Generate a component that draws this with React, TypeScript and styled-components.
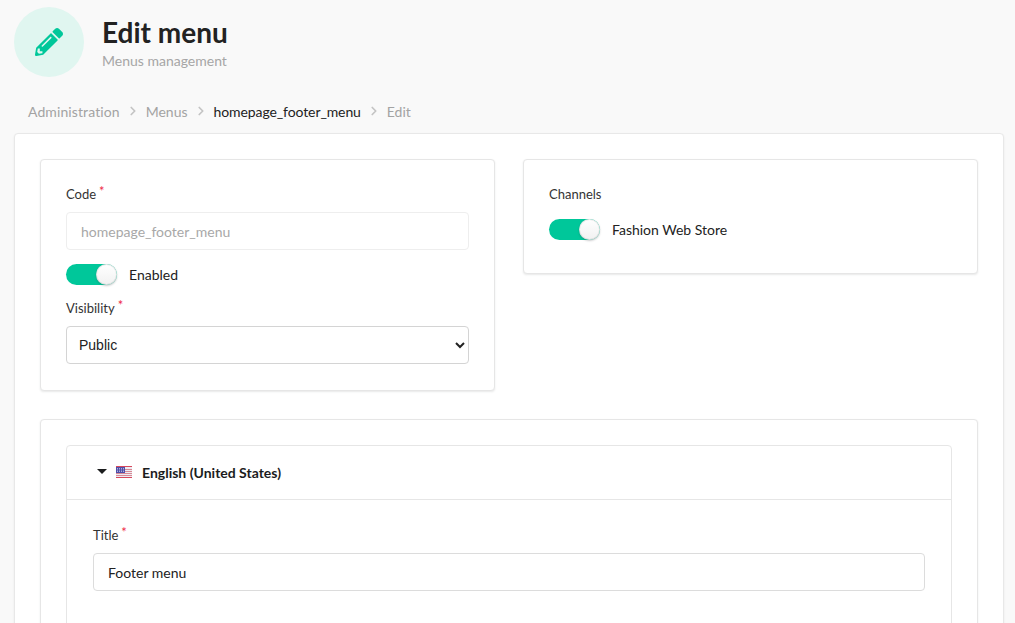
import React from 'react';
import styled, { createGlobalStyle } from 'styled-components';
import { FaPencilAlt } from 'react-icons/fa';
import { ChevronRight } from 'lucide-react';

const GlobalStyle = createGlobalStyle`
    html, body {
        margin: 0;
        height: 623px;
        overflow: hidden;
        background: #f9f9f9;
        font-family: Lato, 'Liberation Sans', sans-serif;
        font-size: 14px;
        color: #222;
    }
    * {
        box-sizing: border-box;
    }
`;

const Page = styled.div`
    padding: 7px 11px 0 14px;
`;
const Header = styled.header`
    display: flex;
    align-items: flex-start;
    gap: 18px;
`;
const IconCircle = styled.div`
    width: 70px;
    height: 70px;
    border-radius: 50%;
    background: #e0f6f0;
    color: #00c79a;
    display: flex;
    align-items: center;
    justify-content: center;
    font-size: 28px;
`;
const HeaderText = styled.div`
    padding-top: 8px;
`;
const Title = styled.h1`
    margin: 0;
    font-size: 28px;
    line-height: 34px;
    font-weight: 700;
    color: #222;
`;
const Subtitle = styled.div`
    margin-top: 2px;
    font-size: 14px;
    line-height: 20px;
    color: #a6a6a6;
`;
const Breadcrumb = styled.nav`
    display: flex;
    align-items: center;
    margin: 24px 0 0 14px;
    height: 20px;
    font-size: 14px;
`;
const Crumb = styled.span<{ $active?: boolean; $spacing?: number }>`
    color: ${(p) => (p.$active ? '#222' : '#a3a3a3')};
    letter-spacing: ${(p) => p.$spacing ?? 0}px;
`;
const Divider = styled.span`
    display: flex;
    width: 26px;
    justify-content: center;
    color: #c4c4c4;
`;
const Main = styled.main`
    margin-top: 12px;
    padding: 25px;
    background: #fff;
    border: 1px solid #e8e8e8;
    border-radius: 4px;
    box-shadow: 0 1px 2px rgba(34, 36, 38, 0.08);
`;
const Columns = styled.div`
    display: grid;
    grid-template-columns: 455px 455px;
    gap: 28px;
    align-items: start;
`;
const Card = styled.section`
    padding: 25px;
    background: #fff;
    border: 1px solid #e6e6e6;
    border-radius: 4px;
    box-shadow: 0 1px 2px rgba(34, 36, 38, 0.1);
`;
const FormCard = styled(Card)`
    padding-bottom: 26px;
`;
const TranslationCard = styled(Card)`
    margin-top: 28px;
    width: 938px;
`;
const Label = styled.label`
    display: block;
    font-size: 13px;
    line-height: 18px;
    color: #333;
    margin-bottom: 9px;
`;
const Star = styled.span`
    color: #ee2a47;
    font-size: 13px;
    margin-left: 3px;
    position: relative;
    top: -3px;
`;
const TextInput = styled.div<{ $disabled?: boolean }>`
    height: 38px;
    display: flex;
    align-items: center;
    padding: 0 14px;
    font-size: 14px;
    border-radius: 4px;
    color: ${(p) => (p.$disabled ? '#a8a8a8' : '#222')};
    border: 1px solid ${(p) => (p.$disabled ? '#eeeeee' : '#dcdcdc')};
    background: #fff;
`;
const ToggleRow = styled.div<{ $gap: number }>`
    display: flex;
    align-items: center;
    gap: 12px;
    height: 21px;
    margin-top: ${(p) => p.$gap}px;
    font-size: 14px;
    color: #222;
`;
const Track = styled.span`
    position: relative;
    display: block;
    width: 51px;
    height: 21px;
    border-radius: 11px;
    background: #00c79a;
`;
const Knob = styled.span`
    position: absolute;
    top: 0;
    right: 0;
    width: 21px;
    height: 21px;
    border-radius: 50%;
    background: linear-gradient(#fff, #f1f1f1);
    box-shadow: 0 1px 2px rgba(34, 36, 38, 0.25), 0 0 0 1px rgba(34, 36, 38, 0.1) inset;
`;
const VisibilityField = styled.div`
    margin-top: 14px;
`;
const Select = styled.select`
    display: block;
    width: 100%;
    height: 38px;
    padding: 0 8px;
    font-family: 'Liberation Sans', Arial, sans-serif;
    font-size: 14px;
    color: #222;
    background: #fff;
    border: 1px solid #d4d4d4;
    border-radius: 4px;
`;
const ChannelsBody = styled.div`
    padding-bottom: 8px;
`;
const Accordion = styled.div`
    border: 1px solid #e6e6e6;
    border-radius: 4px;
    height: 400px;
`;
const AccordionHead = styled.div`
    height: 54px;
    display: flex;
    align-items: center;
    padding-left: 30px;
    font-weight: 700;
    font-size: 14px;
    color: #1b1c1d;
    border-bottom: 1px solid #e6e6e6;
`;
const Caret = styled.span`
    width: 0;
    height: 0;
    margin-right: 9px;
    margin-top: -2px;
    border-left: 5px solid transparent;
    border-right: 5px solid transparent;
    border-top: 5px solid #1b1c1d;
`;
const FlagIcon = styled.svg`
    width: 16px;
    height: 12px;
    margin-right: 10px;
    margin-top: -2px;
`;
const AccordionBody = styled.div`
    padding: 26px 26px 0;
`;

function UsFlag() {
    return (
        <FlagIcon viewBox="0 0 16 12">
            <rect width="16" height="12" fill="#ececf2" />
            <rect width="16" height="1" fill="#d8485c" />
            <rect y="11" width="16" height="1" fill="#d8485c" />
            {[3, 5, 7, 9].map((y) => (
                <rect key={y} y={y} width="16" height="1" fill="#d98a96" />
            ))}
            <rect y="1" width="9" height="6" fill="#4f4fa8" />
            <path d="M1 2.5h7M1 4h7M1 5.5h7" stroke="#d6d6f0" strokeWidth="0.7" strokeDasharray="1 1" />
        </FlagIcon>
    );
}

function Toggle() {
    return (
        <Track>
            <Knob />
        </Track>
    );
}

function App() {
    return (
        <Page>
            <GlobalStyle />
            <Header>
                <IconCircle>
                    <FaPencilAlt />
                </IconCircle>
                <HeaderText>
                    <Title>Edit menu</Title>
                    <Subtitle>Menus management</Subtitle>
                </HeaderText>
            </Header>
            <Breadcrumb>
                <Crumb $spacing={0.1}>Administration</Crumb>
                <Divider>
                    <ChevronRight size={14} strokeWidth={3} />
                </Divider>
                <Crumb>Menus</Crumb>
                <Divider>
                    <ChevronRight size={14} strokeWidth={3} />
                </Divider>
                <Crumb $active $spacing={-0.1}>
                    homepage_footer_menu
                </Crumb>
                <Divider>
                    <ChevronRight size={14} strokeWidth={3} />
                </Divider>
                <Crumb>Edit</Crumb>
            </Breadcrumb>
            <Main>
                <Columns>
                    <FormCard>
                        <Label>
                            Code<Star>*</Star>
                        </Label>
                        <TextInput $disabled>homepage_footer_menu</TextInput>
                        <ToggleRow $gap={14}>
                            <Toggle />
                            Enabled
                        </ToggleRow>
                        <VisibilityField>
                            <Label>
                                Visibility<Star>*</Star>
                            </Label>
                            <Select defaultValue="public">
                                <option value="public">Public</option>
                                <option value="private">Private</option>
                            </Select>
                        </VisibilityField>
                    </FormCard>
                    <Card>
                        <ChannelsBody>
                            <Label>Channels</Label>
                            <ToggleRow $gap={16}>
                                <Toggle />
                                Fashion Web Store
                            </ToggleRow>
                        </ChannelsBody>
                    </Card>
                </Columns>
                <TranslationCard>
                    <Accordion>
                        <AccordionHead>
                            <Caret />
                            <UsFlag />
                            English (United States)
                        </AccordionHead>
                        <AccordionBody>
                            <Label>
                                Title<Star>*</Star>
                            </Label>
                            <TextInput>Footer menu</TextInput>
                        </AccordionBody>
                    </Accordion>
                </TranslationCard>
            </Main>
        </Page>
    );
}

export default App;
